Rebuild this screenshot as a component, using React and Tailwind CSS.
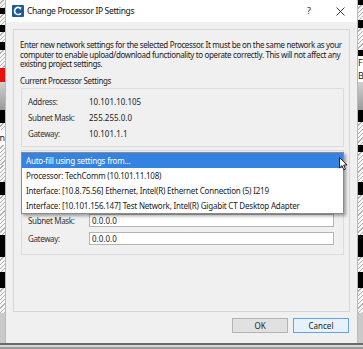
import React from 'react';

const HATCH = 'bg-[repeating-linear-gradient(135deg,#f6f6f6_0px,#f6f6f6_2px,#b4b4b4_2px,#b4b4b4_3px)]';

const KIND = {
  h: HATCH,
  k: 'bg-black',
  r: 'bg-[#e3120b]',
  g: 'bg-[linear-gradient(#d0d0d0,#9a9a9a)]',
  w: 'bg-white',
  l: 'bg-[#c9c9c9]',
};

const leftStrip = [
  [8, 'h'], [6, 'k'], [11, 'h'], [7, 'k'], [10, 'h'], [8, 'k'], [18, 'h'],
  [14, 'r'], [28, 'g'], [13, 'k'], [7, 'h'], [15, 'w', 'n'], [20, 'h'],
  [17, 'h'], [13, 'k'], [40, 'h'], [22, 'k'], [15, 'h'], [16, 'k'], [25, 'h'], [30, 'l'],
];

const rightStrip = [
  [5, 'k'], [15, 'h'], [8, 'k'], [22, 'h'], [6, 'k'], [13, 'w', 'F'], [13, 'w', 'B'],
  [28, 'g'], [12, 'k'], [23, 'h'], [7, 'k'], [30, 'h'], [13, 'k'], [40, 'h'],
  [22, 'k'], [15, 'h'], [16, 'k'], [25, 'h'], [30, 'l'],
];

function Strip({ items, align }) {
  return (
    <div className="flex w-[5px] flex-col overflow-hidden">
      {items.map(([h, kind, label], i) => (
        <div
          key={i}
          className={`${KIND[kind]} flex items-center overflow-hidden text-[9px] leading-none text-[#222] ${align}`}
          style={{ height: h }}
        >
          {label}
        </div>
      ))}
    </div>
  );
}

const currentSettings = [
  ['Address:', '10.101.10.105'],
  ['Subnet Mask:', '255.255.0.0'],
  ['Gateway:', '10.101.1.1'],
];

const dropdownItems = [
  'Auto-fill using settings from...',
  'Processor: TechComm (10.101.11.108)',
  'Interface: [10.8.75.56] Ethernet, Intel(R) Ethernet Connection (5) I219',
  'Interface: [10.101.156.147] Test Network, Intel(R) Gigabit CT Desktop Adapter',
];

function TitleIcon() {
  return (
    <svg width="12" height="12" viewBox="0 0 12 12">
      <rect x="0" y="0" width="12" height="12" rx="1" fill="#1f5a9c" />
      <path d="M8.5 3.2 A3.6 3.6 0 1 0 9 8.2" fill="none" stroke="#fff" strokeWidth="1.6" />
      <path d="M6.5 2 L9.6 2.4 L8.4 5 Z" fill="#fff" />
    </svg>
  );
}

function InputRow({ label, value }) {
  return (
    <div className="flex h-[13px] items-center pl-[6px]">
      <span className="w-[61px] tracking-[-0.35px] text-[#333]">{label}</span>
      <div className="flex h-[13px] w-[245px] items-center border border-[#b5b5b5] bg-white pl-[2px] text-[#222]">
        {value}
      </div>
    </div>
  );
}

export default function App() {
  return (
    <div className="relative flex h-[349px] w-[363px] flex-col overflow-hidden bg-[#a0a0a0] font-['Noto_Sans',sans-serif] text-[8px] leading-[9.5px] text-[#1b1b1b]">
      <div className="flex h-[343px]">
        <Strip items={leftStrip} align="justify-end" />

        <div className="flex w-[353px] flex-col border-x border-[#b9b9b9]">
          {/* title bar */}
          <div className="flex h-[22px] items-center bg-white pl-[6px]">
            <TitleIcon />
            <span className="ml-[3px] text-[8.5px] tracking-[-0.35px] text-[#111]">Change Processor IP Settings</span>
            <span className="ml-auto text-[9px] text-[#222]">?</span>
            <svg className="ml-[25px] mr-[12px]" width="9" height="9" viewBox="0 0 9 9">
              <path d="M0.5 0.5 L8.5 8.5 M8.5 0.5 L0.5 8.5" stroke="#222" strokeWidth="0.9" />
            </svg>
          </div>

          {/* body */}
          <div className="flex flex-1 flex-col bg-[#f0f0f0] px-[7px] pt-[7px]">
            <div className="flex h-[283px] flex-col border border-[#d6d6d6] pl-[7px] pr-[5px] pt-[10px]">
              <p className="-ml-[1px] whitespace-nowrap tracking-[-0.36px]">
                Enter new network settings for the selected Processor. It must be on the same network as your
                <br />
                computer to enable upload/download functionality to operate correctly. This will not affect any
                <br />
                existing project settings.
              </p>
              <div className="-ml-[1px] mt-[7.5px] leading-[10px] tracking-[-0.36px] text-[#222]">Current Processor Settings</div>

              <div className="mt-[2px] flex flex-col border border-[#dcdcdc] pb-[4px] pt-[5px]">
                {currentSettings.map(([label, value]) => (
                  <div key={label} className="flex h-[16px] items-center pl-[6px]">
                    <span className="w-[61px] tracking-[-0.35px] text-[#333]">{label}</span>
                    <span className="text-[#222]">{value}</span>
                  </div>
                ))}
              </div>

              <div className="relative mt-[3px] flex flex-col border border-[#dcdcdc] pb-[9px] pt-[5px]">
                {/* combo box and address field, covered by the open list */}
                <div className="mx-[6px] h-[14px] border border-[#adadad] bg-[#e5e5e5]" />
                <div className="mt-[26px] flex flex-col gap-[5px]">
                  <div className="ml-[73px] h-[13px] w-[245px] border border-[#b5b5b5] bg-white" />
                  <InputRow label="Subnet Mask:" value="0.0.0.0" />
                  <InputRow label="Gateway:" value="0.0.0.0" />
                </div>

                {/* open dropdown list */}
                <div className="absolute -left-[1px] -right-[1px] top-[1px] border border-[#8a8a8a] bg-white shadow-[2px_2px_3px_rgba(0,0,0,0.35)]">
                  {dropdownItems.map((item, i) => (
                    <div
                      key={item}
                      className={`flex h-[15px] items-center whitespace-nowrap pl-[4px] tracking-[-0.2px] ${i === 0 ? 'bg-[#3483e2] text-white' : 'text-[#222]'}`}
                    >
                      {item}
                    </div>
                  ))}
                </div>
              </div>
            </div>

            <div className="mr-[1px] mt-[6px] flex justify-end gap-[5px]">
              <button className="flex h-[15px] w-[56px] items-center justify-center border border-[#b3b3b3] bg-[#e1e1e1] text-[#222]">
                OK
              </button>
              <button className="flex h-[15px] w-[56px] items-center justify-center border border-[#62a3e6] bg-[#e5f1fb] text-[#222]">
                Cancel
              </button>
            </div>
          </div>
        </div>

        <Strip items={rightStrip} align="justify-start" />
      </div>

      <div className="h-[2px] bg-[#6a6a6a]" />
      <div className="h-[2px] bg-[#d6d6d6]" />
      <div className="h-[2px] bg-[#9c9c9c]" />

      {/* mouse cursor */}
      <svg className="absolute left-[339px] top-[157px]" width="9" height="14" viewBox="0 0 9 14">
        <path d="M0.5 0.5 L0.5 11 L3 8.6 L4.8 12.8 L6.4 12.1 L4.7 8 L8 8 Z" fill="#fff" stroke="#111" strokeWidth="0.9" strokeLinejoin="round" />
      </svg>
    </div>
  );
}
